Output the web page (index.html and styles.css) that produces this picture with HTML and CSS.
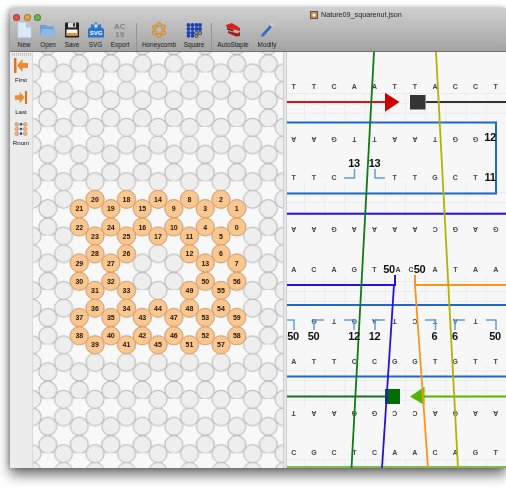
FILE: index.html
```html
<!DOCTYPE html>
<html lang="en">
<head>
<meta charset="utf-8">
<title>Nature09_squarenut.json</title>
<link rel="stylesheet" href="styles.css">
</head>
<body>
<div class="window">
  <header class="toolbar">
    <div class="titlebar">
      <div class="lights"><span class="light red"></span><span class="light amber"></span><span class="light green"></span></div>
      <div class="title">
        <svg class="doc-icon" width="8" height="8" viewBox="0 0 8 8"><rect width="8" height="8" fill="#555"/><rect x="1" y="1" width="6" height="6" fill="#d98a3a"/><circle cx="4" cy="4" r="1.5" fill="#fff"/></svg>
        <span>Nature09_squarenut.json</span>
      </div>
    </div>
    <div class="tools">
      <div class="tool w24">
        <svg width="16" height="16" viewBox="0 0 16 16"><path d="M2 0.5H10L15 5.5V15.5H2Z" fill="#dbe9f6" stroke="#c3d6ea" stroke-width=".6"/><path d="M10 .5V5.5H15Z" fill="#a9c6e4"/></svg>
        <span>New</span>
      </div>
      <div class="tool w24">
        <svg width="16" height="16" viewBox="0 0 16 16"><path d="M0 3H6L7.5 4.5H14V14H0Z" fill="#6d9fd8"/><path d="M2 7H16L14 14H0Z" fill="#8cb8e8"/></svg>
        <span>Open</span>
      </div>
      <div class="tool w24">
        <svg width="16" height="16" viewBox="0 0 16 16"><rect x="1" y="0.5" width="14" height="15" rx="1" fill="#222"/><rect x="4" y="0.5" width="8" height="5" fill="#ddd"/><rect x="9" y="1.2" width="2" height="3.4" fill="#333"/><rect x="2.5" y="7.5" width="11" height="6" fill="#f4f4f4"/><rect x="2.5" y="11" width="11" height="2.5" fill="#e8912e"/></svg>
        <span>Save</span>
      </div>
      <div class="tool w23">
        <svg width="16" height="16" viewBox="0 0 16 16"><path d="M8 0L10 3L13 2L13 5L16 7V15.5H0V7L3 5L3 2L6 3Z" fill="#2f74cf"/><circle cx="8" cy="4" r="1.8" fill="#cfe2f7"/><text class="svg-mark" x="8" y="13">SVG</text></svg>
        <span>SVG</span>
      </div>
      <div class="tool w26">
        <svg width="16" height="16" viewBox="0 0 16 16"><text class="export-mark" x="8" y="7">AC</text><text class="export-mark" x="8" y="15">19</text></svg>
        <span>Export</span>
      </div>
      <div class="sep sep-a"></div>
      <div class="tool w36">
        <svg width="16" height="16" viewBox="0 0 16 16"><g fill="#e9a24f" stroke="#a9702c" stroke-width=".5"><circle cx="8" cy="2.5" r="2.2"/><circle cx="3.5" cy="5.2" r="2.2"/><circle cx="12.5" cy="5.2" r="2.2"/><circle cx="3.5" cy="10.8" r="2.2"/><circle cx="12.5" cy="10.8" r="2.2"/><circle cx="8" cy="13.5" r="2.2"/></g></svg>
        <span>Honeycomb</span>
      </div>
      <div class="tool w34">
        <svg width="16" height="16" viewBox="0 0 16 16"><g fill="#1c3fb5"><circle cx="2.5" cy="3" r="2"/><circle cx="6.5" cy="3" r="2"/><circle cx="10.5" cy="3" r="2"/><circle cx="14" cy="3" r="2"/><circle cx="2.5" cy="7" r="2"/><circle cx="6.5" cy="7" r="2"/><circle cx="10.5" cy="7" r="2"/><circle cx="14" cy="7" r="2"/><circle cx="2.5" cy="11" r="2"/><circle cx="6.5" cy="11" r="2"/><circle cx="2.5" cy="14" r="1.8"/><circle cx="6.5" cy="14" r="1.8"/></g><g fill="#999" stroke="#222" stroke-width=".6"><circle cx="10.5" cy="11" r="1.8"/><circle cx="14" cy="11" r="1.8"/><circle cx="10.5" cy="14" r="1.6"/></g></svg>
        <span>Square</span>
      </div>
      <div class="sep sep-b"></div>
      <div class="tool w36">
        <svg width="16" height="16" viewBox="0 0 16 16"><path d="M1 3L7 1L15 6V9L9 7.5L2 6Z" fill="#d8201f"/><path d="M3 9L13 11.5L15 9.5V14L11 14.5L3 11Z" fill="#b01515"/><path d="M2 6L9 8L8 9.5L2 7.5Z" fill="#7a1010"/></svg>
        <span>AutoStaple</span>
      </div>
      <div class="tool w32">
        <svg width="16" height="16" viewBox="0 0 16 16"><path d="M11 3L13 5L5 14L2 15L3 12Z" fill="#2f6fc8"/><path d="M11 3L13 0.5L15 2.5L13 5Z" fill="#ccd3da"/></svg>
        <span>Modify</span>
      </div>
    </div>
  </header>

  <main class="body">
    <aside class="sidebar">
      <div class="grip"></div>
      <div class="side-tool st-first">
        <svg width="14" height="15" viewBox="0 0 14 15"><rect x="0" y="0" width="2.5" height="15" fill="#e0741e"/><path d="M3 7.5L8.5 1V5H14V10H8.5V14Z" fill="#ec8a35"/></svg>
        <span>First</span>
      </div>
      <div class="side-tool st-last">
        <svg width="14" height="13" viewBox="0 0 14 15"><rect x="11.5" y="0" width="2.5" height="15" fill="#e0741e"/><path d="M11 7.5L5.5 1V5H0V10H5.5V14Z" fill="#ec8a35"/></svg>
        <span>Last</span>
      </div>
      <div class="side-tool st-rnum">
        <svg width="14" height="14" viewBox="0 0 14 15"><g fill="#f0b377" stroke="#b5742f" stroke-width=".5"><circle cx="2.5" cy="2.5" r="2"/><circle cx="11.5" cy="2.5" r="2"/><circle cx="2.5" cy="7.5" r="2"/><circle cx="11.5" cy="7.5" r="2"/><circle cx="2.5" cy="12.5" r="2"/><circle cx="11.5" cy="12.5" r="2"/></g><g fill="#1c4fc0"><circle cx="7" cy="2.5" r="1.4"/><circle cx="7" cy="7.5" r="1.4"/><circle cx="7" cy="12.5" r="1.4"/></g></svg>
        <span>Rnum</span>
      </div>
    </aside>

    <section class="lattice">
      <svg width="250" height="416" viewBox="33 52 250 416">
        <defs>
          <pattern id="honey" width="31.5" height="54.4" patternUnits="userSpaceOnUse" x="79.3" y="181.3">
            <g class="slot">
              <circle cx="0" cy="27.4" r="9"/><circle cx="31.5" cy="27.4" r="9"/>
              <circle cx="0" cy="45.7" r="9"/><circle cx="31.5" cy="45.7" r="9"/>
              <circle cx="15.75" cy="18" r="9"/>
              <circle cx="15.75" cy="54.7" r="9"/><circle cx="15.75" cy="0.3" r="9"/>
            </g>
          </pattern>
        </defs>
        <rect x="33" y="52" width="250" height="416" fill="url(#honey)"/>
        <g class="active">
          <circle cx="79.3" cy="208.7" r="9"/><circle cx="79.3" cy="227" r="9"/><circle cx="79.3" cy="263" r="9"/><circle cx="79.3" cy="281.4" r="9"/><circle cx="79.3" cy="317.4" r="9"/><circle cx="79.3" cy="335.8" r="9"/>
          <circle cx="95" cy="199.3" r="9"/><circle cx="95" cy="236" r="9"/><circle cx="95" cy="253.8" r="9"/><circle cx="95" cy="290.4" r="9"/><circle cx="95" cy="308.2" r="9"/><circle cx="95" cy="344.8" r="9"/>
          <circle cx="110.8" cy="208.7" r="9"/><circle cx="110.8" cy="227" r="9"/><circle cx="110.8" cy="263" r="9"/><circle cx="110.8" cy="281.4" r="9"/><circle cx="110.8" cy="317.4" r="9"/><circle cx="110.8" cy="335.8" r="9"/>
          <circle cx="126.5" cy="199.3" r="9"/><circle cx="126.5" cy="236" r="9"/><circle cx="126.5" cy="253.8" r="9"/><circle cx="126.5" cy="290.4" r="9"/><circle cx="126.5" cy="308.2" r="9"/><circle cx="126.5" cy="344.8" r="9"/>
          <circle cx="142.3" cy="208.7" r="9"/><circle cx="142.3" cy="227" r="9"/><circle cx="142.3" cy="317.4" r="9"/><circle cx="142.3" cy="335.8" r="9"/>
          <circle cx="158" cy="199.3" r="9"/><circle cx="158" cy="236" r="9"/><circle cx="158" cy="308.2" r="9"/><circle cx="158" cy="344.8" r="9"/>
          <circle cx="173.8" cy="208.7" r="9"/><circle cx="173.8" cy="227" r="9"/><circle cx="173.8" cy="317.4" r="9"/><circle cx="173.8" cy="335.8" r="9"/>
          <circle cx="189.5" cy="199.3" r="9"/><circle cx="189.5" cy="236" r="9"/><circle cx="189.5" cy="253.8" r="9"/><circle cx="189.5" cy="290.4" r="9"/><circle cx="189.5" cy="308.2" r="9"/><circle cx="189.5" cy="344.8" r="9"/>
          <circle cx="205.3" cy="208.7" r="9"/><circle cx="205.3" cy="227" r="9"/><circle cx="205.3" cy="263" r="9"/><circle cx="205.3" cy="281.4" r="9"/><circle cx="205.3" cy="317.4" r="9"/><circle cx="205.3" cy="335.8" r="9"/>
          <circle cx="221" cy="199.3" r="9"/><circle cx="221" cy="236" r="9"/><circle cx="221" cy="253.8" r="9"/><circle cx="221" cy="290.4" r="9"/><circle cx="221" cy="308.2" r="9"/><circle cx="221" cy="344.8" r="9"/>
          <circle cx="236.8" cy="208.7" r="9"/><circle cx="236.8" cy="227" r="9"/><circle cx="236.8" cy="263" r="9"/><circle cx="236.8" cy="281.4" r="9"/><circle cx="236.8" cy="317.4" r="9"/><circle cx="236.8" cy="335.8" r="9"/>
        </g>
        <g class="num">
          <text x="79.3" y="211.2">21</text><text x="79.3" y="229.5">22</text><text x="79.3" y="265.5">29</text><text x="79.3" y="283.9">30</text><text x="79.3" y="319.9">37</text><text x="79.3" y="338.3">38</text>
          <text x="95" y="201.8">20</text><text x="95" y="238.5">23</text><text x="95" y="256.3">28</text><text x="95" y="292.9">31</text><text x="95" y="310.7">36</text><text x="95" y="347.3">39</text>
          <text x="110.8" y="211.2">19</text><text x="110.8" y="229.5">24</text><text x="110.8" y="265.5">27</text><text x="110.8" y="283.9">32</text><text x="110.8" y="319.9">35</text><text x="110.8" y="338.3">40</text>
          <text x="126.5" y="201.8">18</text><text x="126.5" y="238.5">25</text><text x="126.5" y="256.3">26</text><text x="126.5" y="292.9">33</text><text x="126.5" y="310.7">34</text><text x="126.5" y="347.3">41</text>
          <text x="142.3" y="211.2">15</text><text x="142.3" y="229.5">16</text><text x="142.3" y="319.9">43</text><text x="142.3" y="338.3">42</text>
          <text x="158" y="201.8">14</text><text x="158" y="238.5">17</text><text x="158" y="310.7">44</text><text x="158" y="347.3">45</text>
          <text x="173.8" y="211.2">9</text><text x="173.8" y="229.5">10</text><text x="173.8" y="319.9">47</text><text x="173.8" y="338.3">46</text>
          <text x="189.5" y="201.8">8</text><text x="189.5" y="238.5">11</text><text x="189.5" y="256.3">12</text><text x="189.5" y="292.9">49</text><text x="189.5" y="310.7">48</text><text x="189.5" y="347.3">51</text>
          <text x="205.3" y="211.2">3</text><text x="205.3" y="229.5">4</text><text x="205.3" y="265.5">13</text><text x="205.3" y="283.9">50</text><text x="205.3" y="319.9">53</text><text x="205.3" y="338.3">52</text>
          <text x="221" y="201.8">2</text><text x="221" y="238.5">5</text><text x="221" y="256.3">6</text><text x="221" y="292.9">55</text><text x="221" y="310.7">54</text><text x="221" y="347.3">57</text>
          <text x="236.8" y="211.2">1</text><text x="236.8" y="229.5">0</text><text x="236.8" y="265.5">7</text><text x="236.8" y="283.9">56</text><text x="236.8" y="319.9">59</text><text x="236.8" y="338.3">58</text>
        </g>
      </svg>
    </section>

    <div class="divider"></div>

    <section class="path">
      <svg width="219" height="416" viewBox="287 52 219 416">
        <defs>
          <pattern id="cells" width="20.2" height="9.9" patternUnits="userSpaceOnUse" x="304" y="93">
            <path class="cell" d="M0 0V9.9M0 0H20.2"/>
          </pattern>
        </defs>
        <rect x="287" y="93" width="219" height="30" fill="url(#cells)"/>
        <rect x="287" y="183" width="219" height="31" fill="url(#cells)"/>
        <rect x="287" y="275" width="219" height="31" fill="url(#cells)"/>
        <rect x="287" y="366" width="219" height="41" fill="url(#cells)"/>
        <rect x="287" y="458" width="219" height="10" fill="url(#cells)"/>

        <g class="base">
          <text x="293.7" y="89">T</text><text x="313.9" y="89">T</text><text x="334.1" y="89">C</text><text x="354.3" y="89">A</text><text x="374.5" y="89">A</text><text x="394.7" y="89">T</text><text x="414.9" y="89">T</text><text x="435.1" y="89">A</text><text x="455.3" y="89">C</text><text x="475.5" y="89">C</text><text x="495.7" y="89">T</text>
          <text x="293.7" y="180">T</text><text x="313.9" y="180">T</text><text x="334.1" y="180">C</text><text x="394.7" y="180">T</text><text x="414.9" y="180">T</text><text x="435.1" y="180">G</text><text x="455.3" y="180">C</text><text x="475.5" y="180">T</text>
          <text x="293.7" y="272">A</text><text x="313.9" y="272">C</text><text x="334.1" y="272">A</text><text x="354.3" y="272">G</text><text x="374.5" y="272">T</text><text x="398" y="272">A</text><text x="411" y="272">C</text><text x="435.1" y="272">A</text><text x="455.3" y="272">T</text><text x="475.5" y="272">A</text><text x="495.7" y="272">A</text>
          <text x="293.7" y="364">A</text><text x="313.9" y="364">T</text><text x="334.1" y="364">T</text><text x="354.3" y="364">C</text><text x="374.5" y="364">C</text><text x="394.7" y="364">G</text><text x="414.9" y="364">G</text><text x="435.1" y="364">T</text><text x="455.3" y="364">G</text><text x="475.5" y="364">T</text><text x="495.7" y="364">T</text>
          <text x="293.7" y="455">C</text><text x="313.9" y="455">G</text><text x="334.1" y="455">C</text><text x="354.3" y="455">T</text><text x="374.5" y="455">C</text><text x="394.7" y="455">A</text><text x="414.9" y="455">A</text><text x="435.1" y="455">C</text><text x="455.3" y="455">A</text><text x="475.5" y="455">G</text><text x="495.7" y="455">T</text>
        </g>
        <g class="base">
          <text transform="rotate(180 293.7 139)" x="293.7" y="141.5">A</text><text transform="rotate(180 313.9 139)" x="313.9" y="141.5">A</text><text transform="rotate(180 334.1 139)" x="334.1" y="141.5">G</text><text transform="rotate(180 354.3 139)" x="354.3" y="141.5">T</text><text transform="rotate(180 374.5 139)" x="374.5" y="141.5">T</text><text transform="rotate(180 394.7 139)" x="394.7" y="141.5">A</text><text transform="rotate(180 414.9 139)" x="414.9" y="141.5">A</text><text transform="rotate(180 435.1 139)" x="435.1" y="141.5">T</text><text transform="rotate(180 455.3 139)" x="455.3" y="141.5">G</text><text transform="rotate(180 475.5 139)" x="475.5" y="141.5">G</text>
          <text transform="rotate(180 293.7 229)" x="293.7" y="231.5">A</text><text transform="rotate(180 313.9 229)" x="313.9" y="231.5">A</text><text transform="rotate(180 334.1 229)" x="334.1" y="231.5">G</text><text transform="rotate(180 354.3 229)" x="354.3" y="231.5">A</text><text transform="rotate(180 374.5 229)" x="374.5" y="231.5">A</text><text transform="rotate(180 394.7 229)" x="394.7" y="231.5">A</text><text transform="rotate(180 414.9 229)" x="414.9" y="231.5">A</text><text transform="rotate(180 435.1 229)" x="435.1" y="231.5">C</text><text transform="rotate(180 455.3 229)" x="455.3" y="231.5">G</text><text transform="rotate(180 475.5 229)" x="475.5" y="231.5">A</text><text transform="rotate(180 495.7 229)" x="495.7" y="231.5">G</text>
          <text transform="rotate(180 313.9 321)" x="313.9" y="323.5">G</text><text transform="rotate(180 334.1 321)" x="334.1" y="323.5">T</text><text transform="rotate(180 354.3 321)" x="354.3" y="323.5">G</text><text transform="rotate(180 374.5 321)" x="374.5" y="323.5">A</text><text transform="rotate(180 394.7 321)" x="394.7" y="323.5">T</text><text transform="rotate(180 414.9 321)" x="414.9" y="323.5">C</text><text transform="rotate(180 435.1 321)" x="435.1" y="323.5">T</text><text transform="rotate(180 455.3 321)" x="455.3" y="323.5">A</text><text transform="rotate(180 475.5 321)" x="475.5" y="323.5">T</text>
          <text transform="rotate(180 293.7 413)" x="293.7" y="415.5">T</text><text transform="rotate(180 313.9 413)" x="313.9" y="415.5">A</text><text transform="rotate(180 334.1 413)" x="334.1" y="415.5">A</text><text transform="rotate(180 354.3 413)" x="354.3" y="415.5">G</text><text transform="rotate(180 374.5 413)" x="374.5" y="415.5">G</text><text transform="rotate(180 394.7 413)" x="394.7" y="415.5">C</text><text transform="rotate(180 414.9 413)" x="414.9" y="415.5">C</text><text transform="rotate(180 435.1 413)" x="435.1" y="415.5">A</text><text transform="rotate(180 455.3 413)" x="455.3" y="415.5">G</text><text transform="rotate(180 475.5 413)" x="475.5" y="415.5">A</text><text transform="rotate(180 495.7 413)" x="495.7" y="415.5">A</text>
        </g>

        <g class="strand">
          <path class="s-blue" d="M287 122.5H496V193.5H287"/>
          <path class="s-blue" d="M287 305H506"/>
          <path class="s-blue" d="M287 376.5H506"/>
          <path class="s-indigo" d="M287 213.7H506"/>
          <path class="s-lime" d="M287 467H506"/>
          <path class="s-red" d="M287 102H386"/>
          <path class="s-black" d="M426 102H506"/>
          <path class="s-indigo" d="M287 285H395V275"/>
          <path class="s-orange" d="M506 285H415V275"/>
          <path class="s-dgreen" d="M287 396.5H386"/>
          <path class="s-lgreen" d="M424 396.5H506"/>
        </g>
        <polygon class="f-red" points="385,92.7 399.5,102 385,111.7"/>
        <rect class="f-black" x="410" y="95" width="15.5" height="14.5"/>
        <rect class="f-dgreen" x="385" y="389" width="15" height="15"/>
        <polygon class="f-lgreen" points="410,396.5 424.5,386.7 424.5,405"/>

        <g class="strand xover">
          <path class="s-indigo" d="M394 285L382 468"/>
          <path class="s-orange" d="M415 285L428 468"/>
          <path class="s-green" d="M374 52L351.5 468"/>
          <path class="s-olive" d="M436 52L458 468"/>
        </g>

        <g class="stub">
          <path d="M344 178H354.5V169"/>
          <path d="M385 178H375V169"/>
          <path d="M287 320H294V330"/>
          <path d="M324 320H314V330"/>
          <path d="M344 320H354V330"/>
          <path d="M385 320H375V330"/>
          <path d="M425 320H435.5V330"/>
          <path d="M465 320H455V330"/>
          <path d="M486 320H496V330"/>
        </g>

        <g class="label">
          <text x="354" y="167">13</text><text x="374.5" y="167">13</text>
          <text x="490" y="141">12</text><text x="490" y="181">11</text>
          <text x="389" y="273">50</text><text x="419.5" y="273">50</text>
          <text x="293" y="340">50</text><text x="313.5" y="340">50</text>
          <text x="354" y="340">12</text><text x="374.5" y="340">12</text>
          <text x="434.5" y="340">6</text><text x="455" y="340">6</text><text x="495" y="340">50</text>
        </g>
      </svg>
    </section>
  </main>
</div>
</body>
</html>
```

FILE: styles.css
```css
* { box-sizing: border-box; }
html, body { margin: 0; padding: 0; background: #fff; overflow: hidden; }
body { width: 506px; height: 500px; padding: 8px 0 0 10px; font-family: "Liberation Sans", Arial, sans-serif; }

.window {
  width: 496px;
  height: 460px;
  display: flex;
  flex-direction: column;
  box-shadow: 0 7px 12px rgba(0, 0, 0, .55), -1px 0 5px rgba(0, 0, 0, .3);
  filter: blur(.3px);
  overflow: visible;
}

.toolbar {
  height: 44px;
  flex: none;
  background: linear-gradient(#cfcfcf, #a3a3a3);
  border-bottom: 1px solid #6f6f6f;
  display: flex;
  flex-direction: column;
}
.titlebar { height: 12px; margin-top: 1px; position: relative; display: flex; align-items: center; }
.lights { display: flex; gap: 3.5px; padding: 5px 0 0 3px; }
.light { width: 7px; height: 7px; border-radius: 50%; border: 1px solid rgba(0, 0, 0, .25); }
.light.red { background: #e0524c; }
.light.amber { background: #e8a33a; }
.light.green { background: #6cb644; }
.title {
  position: absolute;
  left: 300px;
  top: 1px;
  display: flex;
  align-items: center;
  gap: 3px;
  font-size: 7.2px;
  color: #222;
  white-space: nowrap;
  line-height: 10px;
}

.tools { display: flex; align-items: flex-start; padding: 1px 0 0 2px; }
.tool { display: flex; flex-direction: column; align-items: center; gap: 1px; flex: none; }
.tool svg { width: 16px; height: 16px; display: block; }
.tool span { font-size: 6.4px; line-height: 8px; color: #1c1c1c; white-space: nowrap; margin-top: 2px; }
.w23 { width: 23px; }
.w24 { width: 24px; }
.w26 { width: 26px; }
.w32 { width: 32px; }
.w34 { width: 34px; }
.w36 { width: 36px; }
.sep { width: 1px; height: 28px; background: #949494; flex: none; margin-top: 1px; }
.sep-a { margin-left: 3px; margin-right: 4px; }
.sep-b { margin-left: 0; margin-right: 3px; }
.svg-mark { font-size: 6px; font-weight: 700; fill: #fff; text-anchor: middle; }
.export-mark { font-size: 7.5px; fill: #6a6a6a; text-anchor: middle; letter-spacing: .5px; }

.body { flex: 1; min-height: 0; display: flex; }

.sidebar { width: 23px; flex: none; background: #ececec; border-right: 1px solid #dadada; display: flex; flex-direction: column; align-items: center; }
.grip { width: 19px; height: 3px; margin-top: 1px; margin-bottom: 2px; background: repeating-linear-gradient(90deg, #c4c4c4 0 1px, transparent 1px 2px); }
.side-tool { display: flex; flex-direction: column; align-items: center; }
.side-tool svg { display: block; }
.side-tool span { font-size: 6.2px; line-height: 8px; color: #111; }
.st-first { margin-bottom: 7px; }
.st-first span { margin-top: 3px; }
.st-last { margin-bottom: 6px; }
.st-last span { margin-top: 4px; }
.st-rnum span { margin-top: 3px; }

.lattice { width: 250px; flex: none; background: #f8f8f8; }
.lattice svg, .path svg { display: block; }
.slot circle { fill: #eeeeee; stroke: #b6b6b6; stroke-width: 1; }
.active circle { fill: #fbc791; stroke: #dca26a; stroke-width: 1; }
.num text { font-size: 7px; font-weight: 700; fill: #1c150e; text-anchor: middle; }

.divider { width: 4px; flex: none; background: #e6e6e6; border-left: 1px solid #cfcfcf; border-right: 1px solid #cfcfcf; }

.path { flex: 1; min-width: 0; background: #f7f7f7; }
.cell { fill: none; stroke: #e2e2e2; stroke-width: 1; }
.base text { font-size: 7px; font-weight: 700; fill: #444; text-anchor: middle; }

.strand path { fill: none; stroke-width: 2; }
.xover path { stroke-width: 1.8; }
.s-blue { stroke: #1c68cc; }
.s-indigo { stroke: #2a10dc; }
.s-lime { stroke: #7dbb4c; }
.s-red { stroke: #d8101c; }
.s-black { stroke: #333; }
.s-orange { stroke: #f7961f; }
.s-dgreen { stroke: #1b6e22; }
.s-lgreen { stroke: #55b400; }
.s-green { stroke: #0e7a18; }
.s-olive { stroke: #b2b200; }
.f-red { fill: #cc0000; }
.f-black { fill: #333; }
.f-dgreen { fill: #006f00; }
.f-lgreen { fill: #55b400; }
.stub path { fill: none; stroke: #5f9fe0; stroke-width: 1.5; }
.label text { font-size: 11px; font-weight: 700; fill: #111; text-anchor: middle; letter-spacing: -.3px; }
```
